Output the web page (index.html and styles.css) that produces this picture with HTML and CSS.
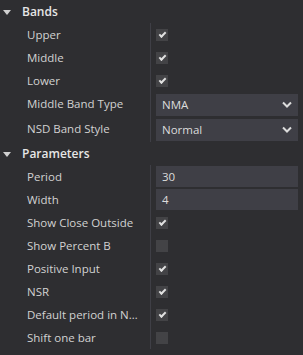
FILE: index.html
```html
<!DOCTYPE html>
<html>
<head>
    <title>Properties</title>
    <link rel="stylesheet" href="styles.css">
</head>
<body>
<div class="props">

    <div class="cat">
        <span class="caret"></span>
        <span class="cat-name">Bands</span>
    </div>
    <div class="row">
        <div class="name">Upper</div>
        <div class="value"><span class="check on"></span></div>
    </div>
    <div class="row">
        <div class="name">Middle</div>
        <div class="value"><span class="check on"></span></div>
    </div>
    <div class="row">
        <div class="name">Lower</div>
        <div class="value"><span class="check on"></span></div>
    </div>
    <div class="row tall">
        <div class="name">Middle Band Type</div>
        <div class="value">
            <div class="combo">
                <span>NMA</span>
                <svg class="chev" width="10" height="7" viewBox="0 0 10 7"><path d="M1 1.5 L5 5.5 L9 1.5" fill="none" stroke="#dcdcdc" stroke-width="2"/></svg>
            </div>
        </div>
    </div>
    <div class="row tall">
        <div class="name">NSD Band Style</div>
        <div class="value">
            <div class="combo">
                <span>Normal</span>
                <svg class="chev" width="10" height="7" viewBox="0 0 10 7"><path d="M1 1.5 L5 5.5 L9 1.5" fill="none" stroke="#dcdcdc" stroke-width="2"/></svg>
            </div>
        </div>
    </div>

    <div class="cat">
        <span class="caret"></span>
        <span class="cat-name">Parameters</span>
    </div>
    <div class="row">
        <div class="name">Period</div>
        <div class="value"><div class="field">30</div></div>
    </div>
    <div class="row">
        <div class="name">Width</div>
        <div class="value"><div class="field">4</div></div>
    </div>
    <div class="row">
        <div class="name">Show Close Outside</div>
        <div class="value"><span class="check on"></span></div>
    </div>
    <div class="row">
        <div class="name">Show Percent B</div>
        <div class="value"><span class="check"></span></div>
    </div>
    <div class="row">
        <div class="name">Positive Input</div>
        <div class="value"><span class="check on"></span></div>
    </div>
    <div class="row">
        <div class="name">NSR</div>
        <div class="value"><span class="check on"></span></div>
    </div>
    <div class="row">
        <div class="name">Default period in NSR</div>
        <div class="value"><span class="check on"></span></div>
    </div>
    <div class="row">
        <div class="name">Shift one bar</div>
        <div class="value"><span class="check"></span></div>
    </div>

</div>
</body>
</html>
```

FILE: styles.css
```css
* {
    box-sizing: border-box;
}

html, body {
    margin: 0;
    padding: 0;
    background: #2e2e31;
    font-family: "Open Sans", "Noto Sans", Arial, sans-serif;
    font-size: 11.5px;
    color: #d2d2d2;
}

.props {
    display: flex;
    flex-direction: column;
}

.cat {
    display: flex;
    align-items: center;
    height: 23px;
}

.caret {
    width: 0;
    height: 0;
    margin: 1px 11px 0 3px;
    border-left: 4px solid transparent;
    border-right: 4px solid transparent;
    border-top: 5px solid #d0d0d0;
}

.cat-name {
    font-size: 12px;
    font-weight: 600;
    color: #e6e6e6;
}

.row {
    display: grid;
    grid-template-columns: 150px 1fr;
    height: 23px;
}

.row.tall {
    height: 25px;
}

.name {
    padding-left: 27px;
    padding-right: 10px;
    line-height: 23px;
    overflow: hidden;
    white-space: nowrap;
    text-overflow: ellipsis;
}

.value {
    display: flex;
    align-items: center;
    padding: 0 5px;
    border-left: 1px solid #3f3f46;
}

.check {
    position: relative;
    width: 12px;
    height: 12px;
    background: #434346;
}

.check.on:after {
    content: "";
    position: absolute;
    left: 3px;
    top: 3px;
    width: 5px;
    height: 2px;
    border-left: 2px solid #e0e0e0;
    border-bottom: 2px solid #e0e0e0;
    transform: rotate(-45deg);
}

.combo,
.field {
    display: flex;
    align-items: center;
    width: 100%;
    height: 22px;
    padding: 0 6px;
    background: #3f3f46;
    color: #dcdcdc;
}

.field {
    height: 21px;
}

.combo span {
    flex: 1;
}
```
